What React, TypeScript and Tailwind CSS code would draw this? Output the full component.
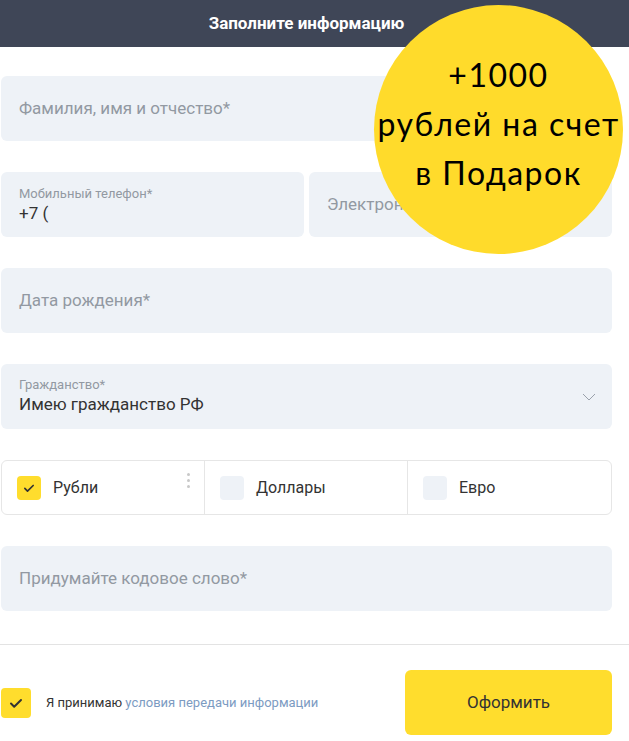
import React from 'react';

const font = { fontFamily: 'Roboto, "Liberation Sans", sans-serif' };

function Check({ size }: { size: number }) {
    return (
        <svg width={size} height={size} viewBox="0 0 24 24" fill="none">
            <path d="M7 12.5l3.2 3.2L17 9" stroke="#333" strokeWidth="2" strokeLinecap="round" strokeLinejoin="round" />
        </svg>
    );
}

function Field({ placeholder }: { placeholder: string }) {
    return (
        <div className="h-[65px] w-full rounded-md bg-[#eef2f7] flex items-center px-[18px]">
            <span className="text-[17px] text-[#9299a2]">{placeholder}</span>
        </div>
    );
}

export default function App() {
    return (
        <div className="relative w-[629px] h-[741px] bg-white overflow-hidden" style={font}>
            {/* Header */}
            <div className="h-[47px] bg-[#3f4657] flex items-center">
                <div className="w-[613px] text-center text-white text-[17px] font-bold">
                    Заполните информацию
                </div>
            </div>

            <div className="pl-[1px] w-[612px] pt-[29px] flex flex-col gap-[31px]">
                <Field placeholder="Фамилия, имя и отчество*" />

                <div className="flex gap-[5px]">
                    <div className="h-[65px] w-[303px] rounded-md bg-[#eef2f7] flex flex-col justify-center px-[18px]">
                        <span className="text-[13px] leading-[16px] text-[#9299a2]">Мобильный телефон*</span>
                        <span className="text-[17px] leading-[22px] text-[#333]">+7 (</span>
                    </div>
                    <div className="h-[65px] flex-1 rounded-md bg-[#eef2f7] flex items-center px-[18px]">
                        <span className="text-[17px] text-[#9299a2]">Электронная почта*</span>
                    </div>
                </div>

                <Field placeholder="Дата рождения*" />

                <div className="h-[65px] w-full rounded-md bg-[#eef2f7] flex items-center pl-[18px] pr-[16px]">
                    <div className="flex flex-col flex-1">
                        <span className="text-[13px] leading-[16px] text-[#9299a2]">Гражданство*</span>
                        <span className="text-[17px] leading-[23px] text-[#333]">Имею гражданство РФ</span>
                    </div>
                    <svg width="14" height="8" viewBox="0 0 14 8" fill="none">
                        <path d="M1 1l6 6 6-6" stroke="#9aa1ab" strokeWidth="1" />
                    </svg>
                </div>

                <div className="h-[55px] w-full rounded-md border border-[#e6e6e6] grid grid-cols-3">
                    <div className="relative flex items-center pl-[15px] gap-[12px] border-r border-[#e6e6e6]">
                        <div className="w-6 h-6 rounded bg-[#ffdd2d] flex items-center justify-center">
                            <Check size={20} />
                        </div>
                        <span className="text-[16px] text-[#333]">Рубли</span>
                        <div className="absolute right-[14px] top-[12px] flex flex-col gap-[3px]">
                            {[...Array(3)].map((_, i) => (
                                <div key={i} className="w-[3px] h-[3px] rounded-full bg-[#c8c8c8]"></div>
                            ))}
                        </div>
                    </div>
                    <div className="flex items-center pl-[15px] gap-[12px] border-r border-[#e6e6e6]">
                        <div className="w-6 h-6 rounded bg-[#eef2f7]"></div>
                        <span className="text-[16px] text-[#333]">Доллары</span>
                    </div>
                    <div className="flex items-center pl-[15px] gap-[12px]">
                        <div className="w-6 h-6 rounded bg-[#eef2f7]"></div>
                        <span className="text-[16px] text-[#333]">Евро</span>
                    </div>
                </div>

                <Field placeholder="Придумайте кодовое слово*" />
            </div>

            <div className="mt-[33px] h-px w-full bg-[#e3e3e3]"></div>

            <div className="pl-[1px] w-[612px] mt-[25px] flex items-center justify-between">
                <div className="flex items-center gap-[15px]">
                    <div className="w-[30px] h-[30px] rounded bg-[#ffdd2d] flex items-center justify-center">
                        <Check size={24} />
                    </div>
                    <span className="text-[13px] text-[#333]">
                        Я принимаю <span className="text-[#7c9bc2]">условия передачи информации</span>
                    </span>
                </div>
                <button className="w-[207px] h-[65px] rounded-md bg-[#ffdd2d] text-[17px] text-[#333]">
                    Оформить
                </button>
            </div>

            {/* Promo badge */}
            <div className="absolute left-[374px] top-[5px] w-[249px] h-[249px] rounded-full bg-[#ffdb2b] flex flex-col items-center justify-center pb-[12px] text-black text-[32px] leading-[49px] tracking-[1.5px]" style={{ fontFamily: 'Lato, "DejaVu Sans", sans-serif' }}>
                <span>+1000</span>
                <span className="whitespace-nowrap">рублей на счет</span>
                <span>в Подарок</span>
            </div>
        </div>
    );
}
